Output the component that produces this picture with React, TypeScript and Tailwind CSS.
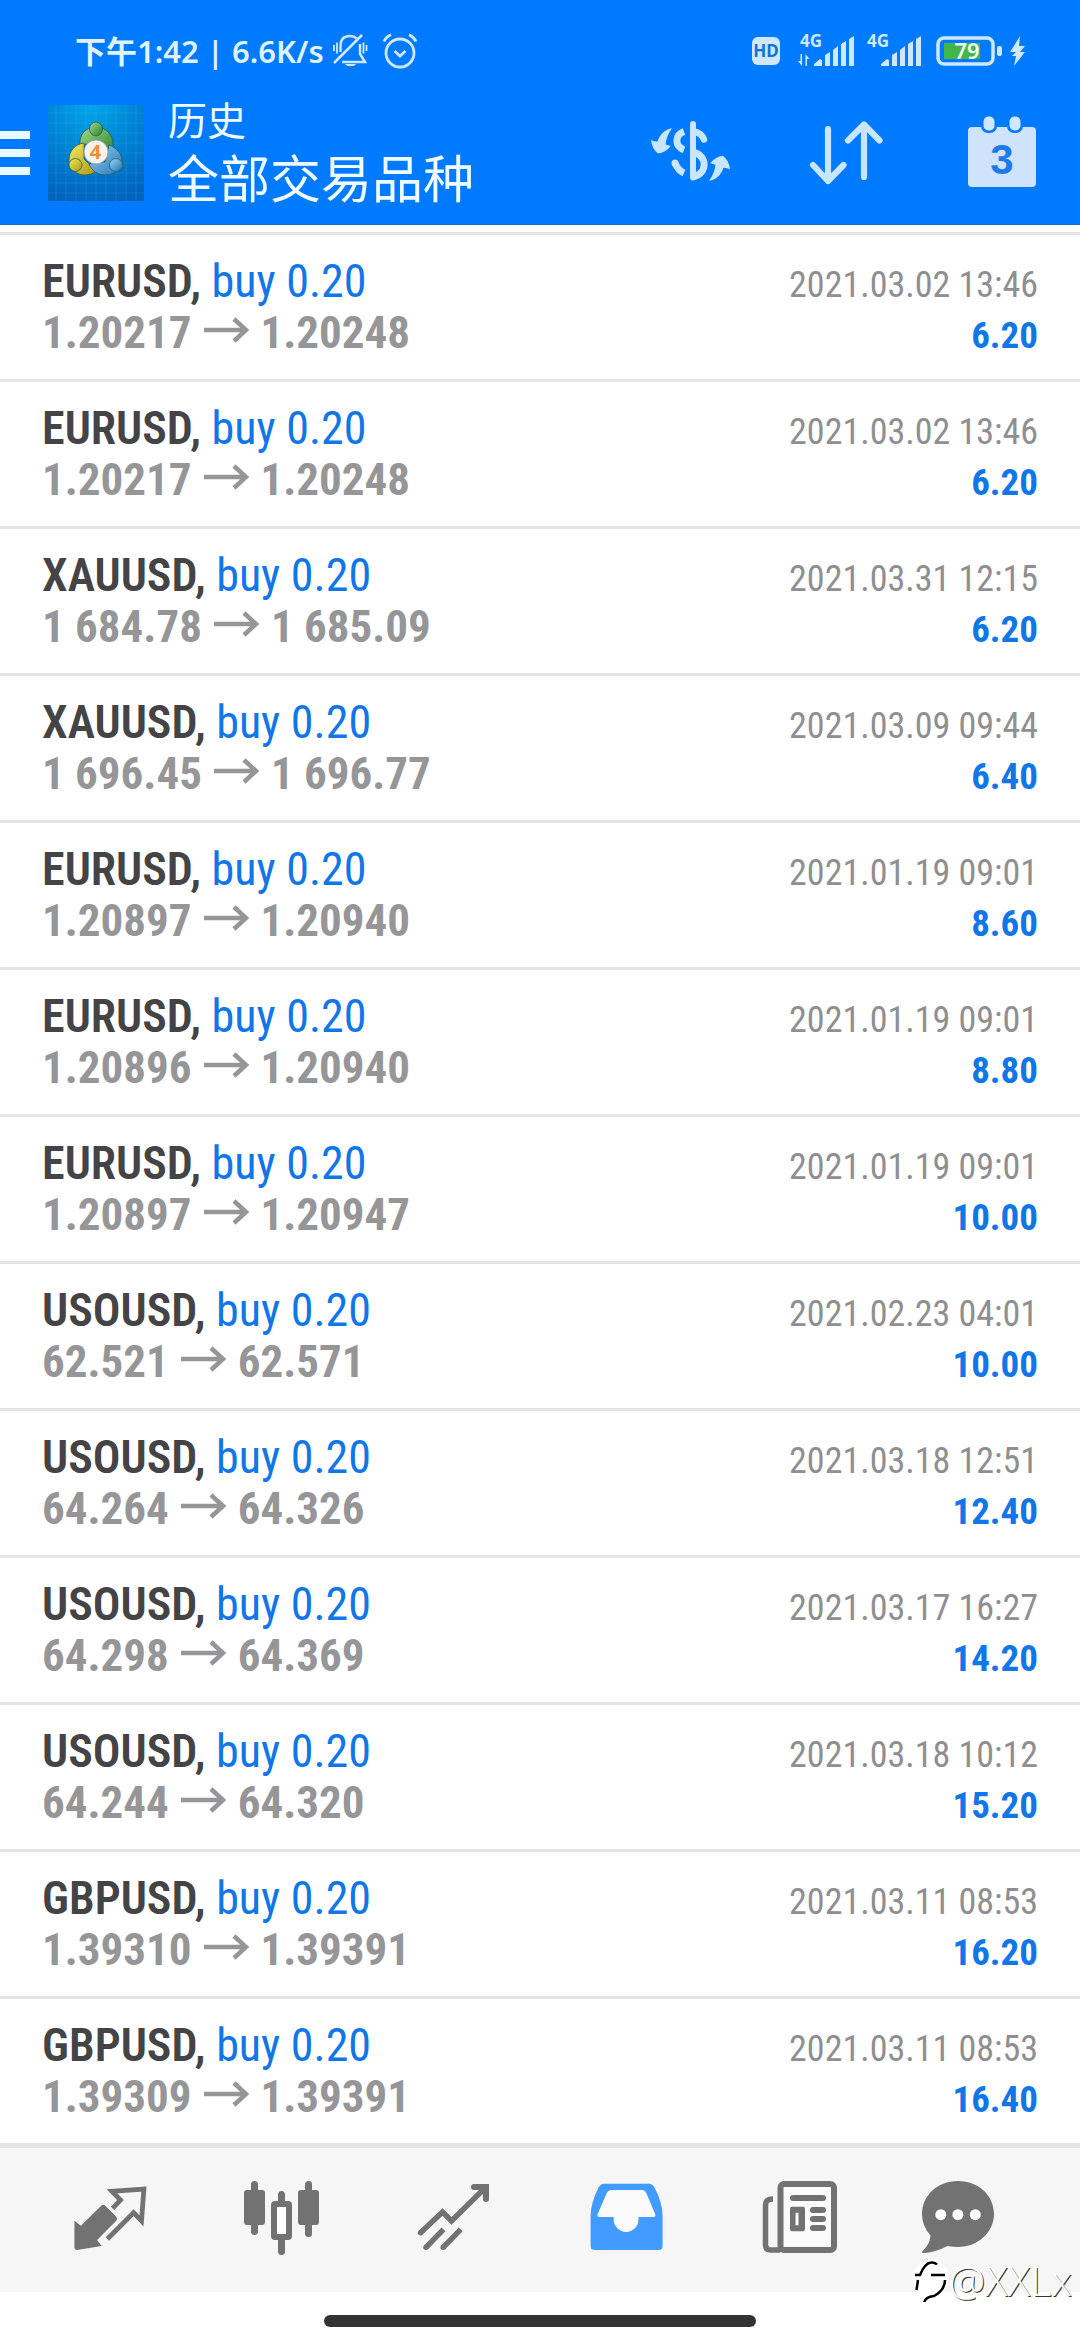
import React from 'react';

interface Deal {
  symbol: string;
  volume: string;
  open: string;
  close: string;
  time: string;
  profit: string;
}

const DEALS: Deal[] = [
  { symbol: 'EURUSD', volume: '0.20', open: '1.20217', close: '1.20248', time: '2021.03.02 13:46', profit: '6.20' },
  { symbol: 'EURUSD', volume: '0.20', open: '1.20217', close: '1.20248', time: '2021.03.02 13:46', profit: '6.20' },
  { symbol: 'XAUUSD', volume: '0.20', open: '1 684.78', close: '1 685.09', time: '2021.03.31 12:15', profit: '6.20' },
  { symbol: 'XAUUSD', volume: '0.20', open: '1 696.45', close: '1 696.77', time: '2021.03.09 09:44', profit: '6.40' },
  { symbol: 'EURUSD', volume: '0.20', open: '1.20897', close: '1.20940', time: '2021.01.19 09:01', profit: '8.60' },
  { symbol: 'EURUSD', volume: '0.20', open: '1.20896', close: '1.20940', time: '2021.01.19 09:01', profit: '8.80' },
  { symbol: 'EURUSD', volume: '0.20', open: '1.20897', close: '1.20947', time: '2021.01.19 09:01', profit: '10.00' },
  { symbol: 'USOUSD', volume: '0.20', open: '62.521', close: '62.571', time: '2021.02.23 04:01', profit: '10.00' },
  { symbol: 'USOUSD', volume: '0.20', open: '64.264', close: '64.326', time: '2021.03.18 12:51', profit: '12.40' },
  { symbol: 'USOUSD', volume: '0.20', open: '64.298', close: '64.369', time: '2021.03.17 16:27', profit: '14.20' },
  { symbol: 'USOUSD', volume: '0.20', open: '64.244', close: '64.320', time: '2021.03.18 10:12', profit: '15.20' },
  { symbol: 'GBPUSD', volume: '0.20', open: '1.39310', close: '1.39391', time: '2021.03.11 08:53', profit: '16.20' },
  { symbol: 'GBPUSD', volume: '0.20', open: '1.39309', close: '1.39391', time: '2021.03.11 08:53', profit: '16.40' },
];

/* ---------- Status bar ---------- */

function Signal({ data }: { data?: boolean }) {
  return (
    <svg className="h-[34px] w-[58px] overflow-visible" viewBox="0 0 58 34" fill="currentColor">
      <text x="4" y="13" fontSize="17" fontWeight="700" fontFamily="Noto Sans, sans-serif">4G</text>
      {data && <path d="M6 20v12l-4-5h2.500v-7zM9.500 32V20l4 5H11v7z" />}
      <path d="M18 32v-2l6-5 2 1v6zM29 21l5-3v14h-5zM37 16l5-4v20h-5zM45 10l5-3v25h-5zM53 5l5-3v30h-5z" />
    </svg>
  );
}

function StatusBar() {
  return (
    <div className="flex h-[82px] items-center justify-between pt-5 pr-[54px] pl-[75px] text-[#cfe8ff]">
      <div className="flex items-center">
        <span className="mr-2 text-[31px] leading-10 font-semibold text-[#dff3ff]">下午1:42 | 6.6K/s</span>
        <svg className="mr-[14px] h-9 w-9" viewBox="0 0 36 36" fill="none" stroke="currentColor" strokeWidth="2.500">
          <path d="M8.500 19v-6C8.500 6 12 3 18 3c3 0 5 .8 6.500 2.500M28 11v10l5 8H10M2 30 30 2" />
          <path d="M2 12v6M5 9.500v11M31.500 9.500v11M34.500 12v6" strokeWidth="1.800" />
          <path d="M13 31h11c-1 3-10 3-11 0z" fill="currentColor" stroke="none" />
        </svg>
        <svg className="h-9 w-9" viewBox="0 0 36 36" fill="none" stroke="currentColor" strokeWidth="2.800">
          <circle cx="18" cy="20" r="14" />
          <path d="m12.500 18 5.500 5 5.500-5M2 8.500Q4 4 9 1.800M34 8.500Q32 4 27 1.800" />
        </svg>
      </div>
      <div className="flex items-center">
        <span className="mr-4 flex h-7 w-7 items-center justify-center rounded-md bg-[#cfe8ff] text-[17px] font-bold text-[#1272d6]">
          HD
        </span>
        <Signal data />
        <span className="w-[9px]" />
        <Signal />
        <svg className="ml-[15px] h-[30px] w-[66px]" viewBox="0 0 66 30" fill="none">
          <rect x="2" y="2" width="55" height="26" rx="6" stroke="currentColor" strokeWidth="3.500" />
          <rect x="8" y="7" width="36" height="16" fill="#43b649" />
          <rect x="61" y="10" width="5" height="10" rx="2" fill="currentColor" />
          <text x="31" y="23" fontSize="22" fontWeight="600" textAnchor="middle" fill="#f4fff4" fontFamily="Noto Sans, sans-serif">79</text>
        </svg>
        <svg className="ml-2 h-[30px] w-4" viewBox="0 0 16 30" fill="currentColor">
          <path d="M10 0 0 16h6l-4 4h4l-2 10L15 16h-5l5-6H9z" />
        </svg>
      </div>
    </div>
  );
}

/* ---------- Toolbar ---------- */

function Logo() {
  return (
    <svg className="h-24 w-24" viewBox="0 0 96 96">
      <defs>
        <radialGradient id="bg" cx="0.45" cy="0" r="1">
          <stop offset="0" stopColor="#00a6ea" />
          <stop offset="0.5" stopColor="#0083d4" />
          <stop offset="1" stopColor="#0064bd" />
        </radialGradient>
        <linearGradient id="green" x1="0" y1="0" x2="1" y2="1">
          <stop offset="0" stopColor="#a5d98a" />
          <stop offset="1" stopColor="#23802f" />
        </linearGradient>
        <linearGradient id="yellow" x1="0" y1="0" x2="1" y2="1">
          <stop offset="0" stopColor="#f3ea62" />
          <stop offset="1" stopColor="#a89a12" />
        </linearGradient>
        <linearGradient id="blue" x1="0" y1="0" x2="1" y2="1">
          <stop offset="0" stopColor="#9fd6f7" />
          <stop offset="1" stopColor="#1d72b8" />
        </linearGradient>
      </defs>
      <rect width="96" height="96" fill="url(#bg)" />
      <path
        d="M8 0v96M18 0v96M28 0v96M38 0v96M48 0v96M58 0v96M68 0v96M78 0v96M88 0v96M0 8h96M0 18h96M0 28h96M0 38h96M0 48h96M0 58h96M0 68h96M0 78h96M0 88h96"
        stroke="#5cc4f2"
        strokeOpacity="0.18"
      />
      <g stroke="#2c5c50" strokeWidth="0.800">
        <path d="M32 40C31 28 39 22 48 22c10 0 17 8 17 17 0 6-2 10-5 13L48 38z" fill="url(#green)" />
        <path d="M36 38c-9 1-15 8-15 17 0 8 7 15 15 15 5 0 9-1 12-4L36 54z" fill="url(#yellow)" />
        <path d="M61 40c8 3 13 9 13 16 0 9-8 14-17 14-7 0-13-4-16-11l16-2z" fill="url(#blue)" />
        <ellipse cx="48" cy="24" rx="6.500" ry="7" fill="url(#green)" />
        <circle cx="27.500" cy="60" r="6.500" fill="url(#yellow)" />
        <circle cx="68" cy="60" r="6.500" fill="url(#blue)" />
      </g>
      <circle cx="48" cy="47" r="12" fill="#f5f4ef" stroke="#8b9a90" strokeWidth="0.800" />
      <text x="47.500" y="54" fontSize="20" fontWeight="700" textAnchor="middle" fill="#ef8f3a" fontFamily="Noto Sans, sans-serif">4</text>
    </svg>
  );
}

function DollarIcon() {
  const arrow = 'M32 25.300C28 31 26 36 25.600 41.500L30.700 43Q26 49.500 18 50.500Q12 46 11 37Q14 38.500 17.500 38.500C20 31 25 26.500 32 25.300z';
  return (
    <svg className="h-[100px] w-[100px]" viewBox="0 0 100 100" fill="none" stroke="currentColor">
      <path d={arrow} fill="currentColor" stroke="none" />
      <path d={arrow} fill="currentColor" stroke="none" transform="rotate(180 50.5 51.6)" />
      <path d="M53 21v53.500" strokeWidth="6" strokeLinecap="round" />
      <path d="M54 28.500Q61.500 30 64 36.500" strokeWidth="6.500" strokeLinecap="round" />
      <path d="M54 49.500C67.500 53 67.500 70 54 73.500" strokeWidth="7" />
      <path d="M44 28.500C34.500 32 34.500 43 44 47" strokeWidth="7" />
      <path d="M35 60Q38 67.500 44 70" strokeWidth="7" />
      <circle cx="35" cy="60" r="3.500" fill="currentColor" stroke="none" />
    </svg>
  );
}

function SortIcon() {
  return (
    <svg className="h-[100px] w-[100px]" viewBox="0 0 100 100" fill="none" stroke="currentColor" strokeWidth="6.200" strokeLinecap="round" strokeLinejoin="round">
      <path d="M32 26v52M17 62l15 16 15.500-16M68 74V21.500M52 37.500l16-16 15.500 16" />
    </svg>
  );
}

function CalendarIcon() {
  return (
    <svg className="h-[100px] w-[100px]" viewBox="0 0 100 100">
      <rect x="16" y="24" width="68" height="60" rx="4" fill="#cfe3fd" />
      <rect x="29" y="11" width="16" height="19" rx="7" fill="#007aff" />
      <rect x="55" y="11" width="16" height="19" rx="7" fill="#007aff" />
      <rect x="31.500" y="13.500" width="11" height="14" rx="5" fill="#cfe8ff" />
      <rect x="57.500" y="13.500" width="11" height="14" rx="5" fill="#cfe8ff" />
      <text x="50" y="70.500" fontSize="42" fontWeight="700" textAnchor="middle" fill="#1b7bea" fontFamily="Liberation Sans, sans-serif">3</text>
    </svg>
  );
}

function Toolbar() {
  return (
    <div className="flex h-[142px] items-center pr-7 text-[#c8e6ff]">
      <button type="button" aria-label="Menu" className="mr-[18px] flex w-[30px] flex-col gap-[10px]">
        <span className="h-2 bg-[#e8f9ff]" />
        <span className="h-2 bg-[#e8f9ff]" />
        <span className="h-2 bg-[#e8f9ff]" />
      </button>
      <Logo />
      <div className="ml-6 flex-1 text-[#f0fbff]">
        <p className="text-[39px] leading-[50px]">历史</p>
        <h1 className="text-[51px] leading-[66px]">全部交易品种</h1>
      </div>
      <div className="flex gap-14">
        <button type="button" aria-label="Symbols"><DollarIcon /></button>
        <button type="button" aria-label="Sort"><SortIcon /></button>
        <button type="button" aria-label="Period"><CalendarIcon /></button>
      </div>
    </div>
  );
}

/* ---------- History list ---------- */

function DealRow({ deal }: { deal: Deal }) {
  return (
    <li className="border-b-[3px] border-[#e4e4e6] px-[42px] py-[21px] leading-[51px]">
      <div className="flex h-[51px] items-baseline justify-between">
        <p className="text-[46px] text-[#1176e8]">
          <span className="font-semibold text-[#444446]">{deal.symbol},</span> buy {deal.volume}
        </p>
        <time className="text-[36px] text-[#8f8f91]">{deal.time}</time>
      </div>
      <div className="flex h-[51px] items-baseline justify-between">
        <p className="text-[45px] font-bold text-[#969698]">
          {deal.open}
          <svg className="mx-[11px] inline h-[26px] w-[47px] align-[5px]" viewBox="0 0 47 26" fill="none" stroke="currentColor" strokeWidth="4.500">
            <path d="M1 13h42M31 2 43 13 31 24" />
          </svg>
          {deal.close}
        </p>
        <span className="text-[37px] font-bold text-[#1176e8]">{deal.profit}</span>
      </div>
    </li>
  );
}

/* ---------- Bottom tabs ---------- */

const TABS = [
  {
    label: 'Quotes',
    icon: (
      <>
        <path d="M14.400 50.700 20.900 55.700 41 36Q43.300 33.500 45.600 36L56 46.500Q58 49 56 51L37.100 70 41.600 76 17 80Q14.400 80 14.400 77z" fill="currentColor" />
        <path d="m52.600 38.300 7.900-8.300-8.600-8.700 32-2.300-2.400 32-7.900-8.300-26.200 26.300" fill="none" stroke="currentColor" strokeWidth="4.800" />
      </>
    ),
  },
  {
    label: 'Chart',
    icon: (
      <g fill="currentColor">
        <rect x="12" y="20" width="21" height="35" rx="3" />
        <rect x="19" y="11" width="7" height="54" rx="3.500" />
        <rect x="66" y="20" width="21" height="35" rx="3" />
        <rect x="73" y="11" width="7" height="56" rx="3.500" />
        <rect x="46" y="21" width="7" height="16" rx="3.500" />
        <rect x="46" y="64" width="7" height="21" rx="3.500" />
        <rect x="42" y="34" width="15" height="33" rx="1" fill="#fff" stroke="currentColor" strokeWidth="6" />
      </g>
    ),
  },
  {
    label: 'Trade',
    icon: (
      <g fill="none" stroke="currentColor" strokeWidth="5.500">
        <path d="m16.500 62.700 22-20.700 9 9 34.500-34" strokeLinejoin="miter" strokeLinecap="round" />
        <path d="M70 17h12v12" strokeLinecap="round" strokeWidth="6" />
        <path d="m22 77.300 17.500-18M39.200 77.300l17.500-18" />
        <circle cx="22" cy="77.300" r="2.700" fill="currentColor" stroke="none" />
        <circle cx="39.200" cy="77.300" r="2.700" fill="currentColor" stroke="none" />
      </g>
    ),
  },
  {
    label: 'History',
    active: true,
    icon: (
      <>
        <path d="M28 13.700h45Q76.500 13.700 78.500 17.500 86.600 33 86.600 46v30q0 4-4 4h-64q-4 0-4-4V46Q14.600 33 22.500 17.500 24.500 13.700 28 13.700z" fill="currentColor" />
        <path d="M35.500 20h30.500q3 0 4.500 3.500L79.300 44.500q.7 2.500-2 2.500H62.500v2.500a12.400 12.400 0 0 1-24.800 0V47H23.500q-2.700 0-2-2.500l9-21Q32 20 35.500 20z" fill="#fbfbfb" />
      </>
    ),
  },
  {
    label: 'News',
    icon: (
      <>
        <rect x="32.500" y="14" width="53.500" height="66" rx="3.500" fill="#fbfbfb" stroke="currentColor" strokeWidth="6" />
        <path d="M25 29q-7.500 0-7.500 6v40q0 5 5 5h10" fill="none" stroke="currentColor" strokeWidth="5.500" />
        <path d="M45 28h30M65 40h10M65 49h10M65 58h10" stroke="currentColor" strokeWidth="6" strokeLinecap="round" />
        <path fillRule="evenodd" d="M44 36.700h11q2 0 2 2v20.500q0 2-2 2H44q-2 0-2-2V38.700q0-2 2-2zM47.500 42.700v12.500h3V42.700z" fill="currentColor" />
      </>
    ),
  },
  {
    label: 'Messages',
    icon: (
      <>
        <path d="M38 11C59 11 74 26 74 44S58 77 38 77Q32 77 27.500 76 14 83 3.500 83 1 83 3 80.500 10 74 10.500 65.500 2 56 2 44C2 26 17 11 38 11z" fill="currentColor" />
        <g fill="#fff">
          <circle cx="20.800" cy="44.700" r="5.500" />
          <circle cx="37.900" cy="44.700" r="5.500" />
          <circle cx="55.300" cy="44.700" r="5.500" />
        </g>
      </>
    ),
  },
];

function TabBar() {
  return (
    <nav className="grid h-[146px] grid-cols-6 items-center border-t-2 border-[#e4e4e6] bg-[#f6f6f6] px-6">
      {TABS.map((tab) => (
        <button
          key={tab.label}
          type="button"
          aria-label={tab.label}
          className={`flex justify-center ${tab.active ? 'text-[#429bff]' : 'text-[#727272]'}`}
        >
          <svg className="h-[100px] w-[100px]" viewBox="0 0 100 100">{tab.icon}</svg>
        </button>
      ))}
    </nav>
  );
}

function Watermark() {
  return (
    <div className="absolute right-2 bottom-[35px] flex items-center text-[41px] leading-[50px] font-light text-white">
      <svg className="h-11 w-9" viewBox="0 0 36 44" fill="none">
        <circle cx="18" cy="20" r="18" fill="#fff" />
        <path d="M2 17h5Q12 5 18 4.500q4-.500 6 2M5 22 3.500 32M18 17h14M32 22q0 10-11 16-9 1-10 7" stroke="#000" strokeWidth="2.500" />
      </svg>
      <span className="[text-shadow:1px_1px_0_#333]">@XXLx</span>
    </div>
  );
}

export default function App() {
  return (
    <div className="relative bg-white font-['Noto_Sans','Noto_Sans_CJK_SC',sans-serif]">
      <header className="border-b border-[#1a6bc4] bg-[#007aff]">
        <StatusBar />
        <Toolbar />
      </header>
      <main className="pt-[7px] font-['Roboto_Condensed',Roboto,sans-serif]">
        <ul className="border-t-[3px] border-[#e4e4e6]">
          {DEALS.map((deal, i) => (
            <DealRow key={i} deal={deal} />
          ))}
        </ul>
      </main>
      <TabBar />
      <div className="flex justify-center pt-[23px] pb-[13px]">
        <span className="h-3 w-2/5 rounded-full bg-[#333]" />
      </div>
      <Watermark />
    </div>
  );
}
